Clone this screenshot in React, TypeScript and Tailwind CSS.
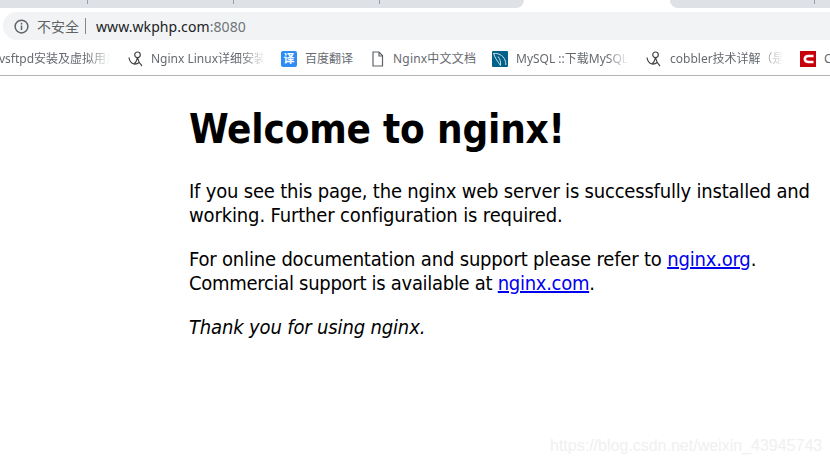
const ui = { fontFamily: '"Noto Sans","Noto Sans CJK SC",sans-serif' };

function Fade({ w, children }: { w: number; children: React.ReactNode }) {
  return (
    <span
      className="block overflow-hidden whitespace-nowrap text-[12px] leading-[16px] text-[#666a70] [mask-image:linear-gradient(to_right,black_80%,transparent)]"
      style={{ width: w }}
    >
      {children}
    </span>
  );
}

function Claw() {
  return (
    <svg width="16" height="16" viewBox="0 0 16 16" fill="none" stroke="#444" strokeWidth="1.2">
      <circle cx="9.5" cy="3.8" r="2.8" />
      <path d="M1 6.5C1.5 10 4 12.5 6 13c2-1.5 3-4 3.5-6.5M9.5 6.5c.5 3 2 6 4.5 8.5M6 13c2 .2 4-.5 5.5-1.8" />
    </svg>
  );
}

function Doc() {
  return (
    <svg width="13" height="16" viewBox="0 0 13 16" fill="none" stroke="#5f6368" strokeWidth="1.2">
      <path d="M2 1h6l3.5 3.5V15H2zM8 1v4h3.5" />
    </svg>
  );
}

function Yi() {
  return (
    <span className="flex h-4 w-4 items-center justify-center rounded-[2px] bg-[#2e8cf5] text-[11px] font-bold leading-none text-white">
      译
    </span>
  );
}

function Dolphin() {
  return (
    <svg width="16" height="16" viewBox="0 0 16 16">
      <rect width="16" height="16" rx="1" fill="#00618a" />
      <path d="M1.5 2.5C6 2 11 4 13 9c.6 1.6.8 3.2.8 5M1.5 2.5C3 7 6 11 8.5 14.5 9 11 8 8 6 5.5" fill="none" stroke="#cfe0e8" strokeWidth="1" />
    </svg>
  );
}

function C() {
  return (
    <svg width="16" height="16" viewBox="0 0 16 16">
      <rect width="16" height="16" fill="#c8000b" />
      <path d="M13.5 5H8.5C6.2 5 4.8 6.2 4.8 8s1.4 3 3.7 3h5" fill="none" stroke="#fff" strokeWidth="2.6" />
    </svg>
  );
}

export default function App() {
  return (
    <div className="relative h-[465px] w-[830px] overflow-hidden bg-white" style={ui}>
      <div className="flex h-[8px]">
        <div className="relative h-full w-[524px] rounded-br-[8px] bg-[#dee1e6]">
          <div className="flex h-[4px] pl-[87px]">
            <i className="h-full w-px bg-[#9aa0a6]" />
            <i className="ml-[145px] h-full w-px bg-[#9aa0a6]" />
            <i className="ml-[145px] h-full w-px bg-[#9aa0a6]" />
          </div>
        </div>
        <div className="w-[146px]" />
        <div className="h-full flex-1 rounded-bl-[8px] bg-[#dee1e6] pl-[144px]">
          <i className="block h-[4px] w-px bg-[#9aa0a6]" />
        </div>
      </div>

      <div className="mt-[4px] ml-[3px] flex h-[28px] items-center rounded-l-[14px] bg-[#f1f3f4] pl-[11px]">
        <svg width="15" height="15" viewBox="0 0 16 16" fill="none" stroke="#5f6368" strokeWidth="1.6">
          <circle cx="8" cy="8" r="6.8" />
          <path d="M8 7v4.6M8 4v1.8" />
        </svg>
        <span className="ml-[8px] text-[14px] text-[#5f6368]">不安全</span>
        <i className="ml-[6px] h-[16px] w-px bg-[#80868b]" />
        <span className="ml-[10px] text-[14px] tracking-[0.08px] text-[#202124]">
          www.wkphp.com<span className="text-[#70757a]">:8080</span>
        </span>
      </div>

      <div className="flex h-[36px] items-center overflow-hidden border-b border-[#b4b4b4] pt-[2px]">
        <div className="ml-[-1px]"><Fade w={111}>vsftpd安装及虚拟用户</Fade></div>
        <div className="ml-[18px]"><Claw /></div>
        <div className="ml-[7px]"><Fade w={114}>Nginx Linux详细安装</Fade></div>
        <div className="ml-[16px]"><Yi /></div>
        <div className="ml-[8px] w-[48px] whitespace-nowrap text-[12px] text-[#666a70]">百度翻译</div>
        <div className="ml-[18px]"><Doc /></div>
        <div className="ml-[9px] w-[83px] whitespace-nowrap text-[12px] tracking-[0.2px] text-[#666a70]">Nginx中文文档</div>
        <div className="ml-[16px]"><Dolphin /></div>
        <div className="ml-[8px]"><Fade w={113}>MySQL ::下载MySQL</Fade></div>
        <div className="ml-[17px]"><Claw /></div>
        <div className="ml-[8px]"><Fade w={113}>cobbler技术详解（是</Fade></div>
        <div className="ml-[17px]"><C /></div>
        <div className="ml-[8px] text-[12px] text-[#666a70]">C</div>
      </div>

      <main className="ml-[189px] mt-[29px] w-[641px] text-[20px] leading-[24px] text-black" style={{ fontFamily: '"DejaVu Sans Condensed","DejaVu Sans",sans-serif' }}>
        <h1 className="text-[40px] font-bold leading-[48px] tracking-[-0.18px]">Welcome to nginx!</h1>
        <p className="mt-[26px] tracking-[-0.2px]">
          If you see this page, the nginx web server is successfully installed and
          <br />
          <span className="tracking-[-0.14px]">working. Further configuration is required.</span>
        </p>
        <p className="mt-[20px] tracking-[-0.18px]">
          For online documentation and support please refer to <a className="text-[#0000ee] underline" href="#">nginx.org</a>.
          <br />
          <span className="tracking-[-0.29px]">Commercial support is available at <a className="text-[#0000ee] underline" href="#">nginx.com</a>.</span>
        </p>
        <p className="mt-[20px] italic tracking-[-0.15px]">Thank you for using nginx.</p>
      </main>

      <div className="absolute left-[550px] top-[436px] text-[16px] leading-[20px] text-[#f0f0f0]" style={{ fontFamily: '"Liberation Sans",sans-serif' }}>
        https://blog.csdn.net/weixin_43945743
      </div>
    </div>
  );
}
